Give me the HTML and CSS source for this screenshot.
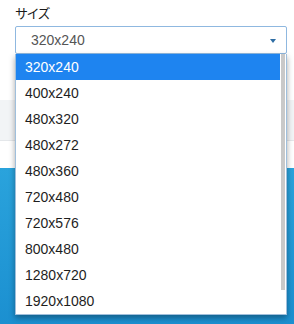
FILE: index.html
```html
<!DOCTYPE html>
<html lang="ja">
<head>
  <meta charset="UTF-8">
  <meta name="viewport" content="width=device-width, initial-scale=1.0">
  <title>サイズ</title>
  <link rel="stylesheet" href="styles.css">
</head>
<body>
  <div class="field">
    <label class="field-label">サイズ</label>
    <div class="select">
      <span class="select-value">320x240</span>
      <span class="caret"></span>
      <div class="dropdown">
        <ul class="options">
          <li class="option selected">320x240</li>
          <li class="option">400x240</li>
          <li class="option">480x320</li>
          <li class="option">480x272</li>
          <li class="option">480x360</li>
          <li class="option">720x480</li>
          <li class="option">720x576</li>
          <li class="option">800x480</li>
          <li class="option">1280x720</li>
          <li class="option">1920x1080</li>
        </ul>
        <div class="scrollbar"><div class="thumb"></div></div>
      </div>
    </div>
  </div>

  <!-- page content behind the open menu -->
  <div class="spacer"></div>
  <div class="band"></div>
  <div class="spacer small"></div>
  <div class="panel"></div>
</body>
</html>
```

FILE: styles.css
```css
body {
  margin: 0;
  width: 294px;
  height: 324px;
  overflow: hidden;
  background: #fff;
  font-family: 'Liberation Sans', Arial, sans-serif;
  color: #222;
}

.field {
  padding: 3px 7px 0 15px;
}

.field-label {
  display: block;
  height: 23px;
  font-family: 'Noto Sans CJK JP', sans-serif;
  font-size: 13px;
  line-height: 19px;
  color: #1a1a1a;
  letter-spacing: -1.5px;
}

.select {
  position: relative;
  height: 26px;
  border: 1px solid #8fb8e0;
  border-radius: 2px;
  display: flex;
  align-items: center;
  padding-left: 15px;
  background: #fff;
}

.select-value {
  font-size: 14px;
  color: #555;
}

.caret {
  position: absolute;
  right: 10px;
  top: 12px;
  width: 0;
  height: 0;
  border-left: 3px solid transparent;
  border-right: 3px solid transparent;
  border-top: 4px solid #2e6da4;
}

.dropdown {
  position: absolute;
  top: 27px;
  left: -1px;
  right: -1px;
  display: flex;
  background: #fff;
  border: 1px solid #9fbfdc;
  border-top: none;
  box-shadow: 0 3px 6px rgba(0, 0, 0, 0.35);
  z-index: 10;
}

.options {
  list-style: none;
  margin: 0;
  padding: 0;
  flex: 1;
}

.option {
  height: 26px;
  line-height: 26px;
  padding-left: 9px;
  font-size: 14px;
  color: #1e1e1e;
}

.option.selected {
  background: #1e84f0;
  color: #fff;
}

.scrollbar {
  width: 5px;
  padding: 0 0 0 1px;
  background: #fff;
}

.thumb {
  width: 4px;
  height: 236px;
  background: #c9c9c9;
}

.spacer {
  height: 46px;
}

.spacer.small {
  height: 27px;
}

.band {
  height: 40px;
  background: #f2f4f6;
  border-bottom: 1px solid #e4e7ea;
}

.panel {
  height: 160px;
  background: linear-gradient(180deg, #2aa3dc, #1b8fd0);
}
```
